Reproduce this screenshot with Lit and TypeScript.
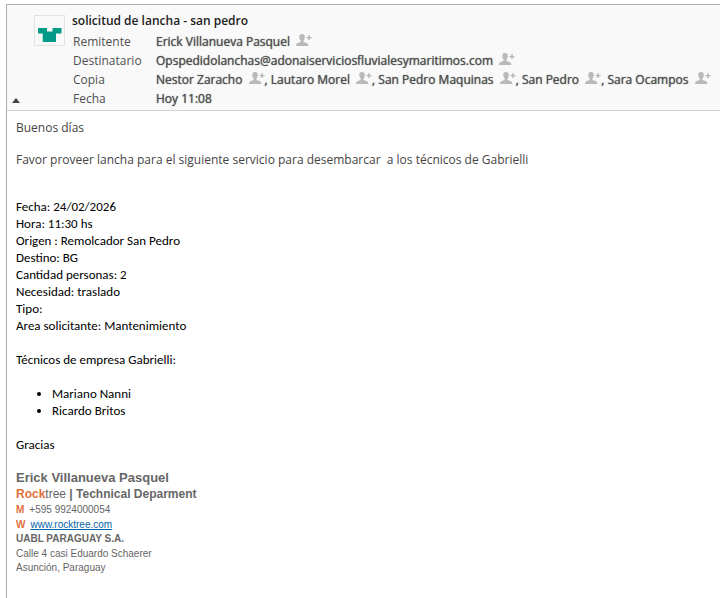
import { LitElement, html, css } from "lit";
import { customElement, property } from "lit/decorators.js";

@customElement("mail-contact")
class MailContact extends LitElement {
  @property() name = "";

  static styles = css`
    :host {
      white-space: nowrap;
    }
    .add {
      width: 16px;
      height: 12px;
      margin: 0 0 0 3px;
      padding: 0;
      border: 0;
      background: none;
      cursor: pointer;
    }
    .icon {
      display: block;
      fill: #b9b9b9;
    }
  `;

  render() {
    return html`${this.name}
      <button class="add" type="button" aria-label="Agregar contacto ${this.name}">
        <svg class="icon" width="16" height="12" viewBox="0 0 16 12" aria-hidden="true">
          <path d="M6 0C8 0 8.8 1 8.8 2.7C8.8 4.6 8.3 5.6 7.6 6.3V8L11.2 9.3Q12.3 9.8 12.3 12H0Q0 9.8 1.1 9.3L4.6 8V6.3C3.8 5.6 3.3 4.6 3.3 2.7C3.3 1 4.1 0 6 0Z" />
          <path d="M12.2 1.2H13.8V2.9H15.6V4.3H13.8V6H12.2V4.3H10.4V2.9H12.2Z" />
        </svg>
      </button>`;
  }
}

@customElement("app-root")
class AppRoot extends LitElement {
  private copies = ["Nestor Zaracho", "Lautaro Morel", "San Pedro Maquinas", "San Pedro", "Sara Ocampos"];

  private details = [
    "Fecha: 24/02/2026",
    "Hora: 11:30 hs",
    "Origen : Remolcador San Pedro",
    "Destino: BG",
    "Cantidad personas: 2",
    "Necesidad: traslado",
    "Tipo:",
    "Area solicitante: Mantenimiento",
  ];

  static styles = css`
    :host {
      display: block;
      box-sizing: border-box;
      min-height: 100vh;
      padding: 4px 0 0 6px;
      background: #fff;
      font: 12px/19px "Open Sans", sans-serif;
      color: #505050;
    }
    .message {
      box-sizing: border-box;
      min-height: calc(100vh - 4px);
      border-top: 1px solid #a9afb2;
      border-left: 1px solid #a9afb2;
    }
    .header {
      display: flex;
      padding: 6px 0 2px 5px;
      background: #f9f9f9;
      border-bottom: 1px solid #cfd2d3;
    }
    .toggle {
      align-self: flex-end;
      flex: none;
      width: 8px;
      height: 5px;
      margin: 0 14px 5px 0;
      padding: 0;
      border: 0;
      background: #444;
      clip-path: polygon(50% 0, 100% 100%, 0 100%);
      cursor: pointer;
    }
    .avatar {
      box-sizing: border-box;
      width: 31px;
      height: 31px;
      margin: 4px 7px 0 0;
      flex: none;
      border: 1px solid #e2e2e2;
    }
    .subject {
      margin: 0 0 2px;
      font-size: 12px;
      font-weight: 600;
      color: #222;
    }
    .fields {
      display: grid;
      grid-template-columns: 83px 1fr;
      margin: 0 0 0 1px;
    }
    .fields dt,
    .fields dd {
      margin: 0;
    }
    .fields dd {
      color: #505050;
      text-shadow: 0 0 1px currentColor;
    }
    .body {
      padding: 9px;
      line-height: 16px;
    }
    .text {
      margin: 0 0 16px;
      color: #444;
    }
    .plain {
      margin-top: 30px;
      font: 13px/17px Carlito, Lato, sans-serif;
      color: #000;
    }
    .plain p {
      margin: 0 0 17px;
    }
    .plain ul {
      margin: 0 0 17px;
      padding-left: 36px;
    }
    .signature {
      font: 10px/14px "Liberation Sans", sans-serif;
      font-style: normal;
      color: #666;
    }
    .name {
      font-size: 13px;
      line-height: 16px;
      font-weight: bold;
    }
    .role {
      font-size: 12px;
      line-height: 16px;
    }
    .line {
      line-height: 15px;
    }
    .accent {
      color: #e0703c;
    }
    .key {
      display: inline-block;
      margin-right: 5px;
      font-weight: bold;
      color: #e0703c;
    }
    a {
      color: #0563a8;
    }
  `;

  render() {
    return html`
      <article class="message">
        <header class="header">
          <button class="toggle" type="button" aria-label="Contraer detalles"></button>
          <svg class="avatar" viewBox="0 0 29 29" aria-hidden="true">
            <path fill="#049a88" d="M3 12H12V15.5H17.5V12H26.5V17.5H21V26H7.7V17.5H3Z" />
          </svg>
          <div>
            <h1 class="subject">solicitud de lancha - san pedro</h1>
            <dl class="fields">
              <dt>Remitente</dt>
              <dd><mail-contact name="Erick Villanueva Pasquel"></mail-contact></dd>
              <dt>Destinatario</dt>
              <dd><mail-contact name="Opspedidolanchas@adonaiserviciosfluvialesymaritimos.com"></mail-contact></dd>
              <dt>Copia</dt>
              <dd>${this.copies.map((n, i) => html`${i ? ", " : ""}<mail-contact name=${n}></mail-contact>`)}</dd>
              <dt>Fecha</dt>
              <dd>Hoy 11:08</dd>
            </dl>
          </div>
        </header>
        <div class="body">
          <p class="text">Buenos días</p>
          <p class="text">Favor proveer lancha para el siguiente servicio para desembarcar&nbsp; a los técnicos de Gabrielli</p>
          <div class="plain">
            <p>${this.details.map((d) => html`${d}<br />`)}</p>
            <p>Técnicos de empresa Gabrielli:</p>
            <ul>
              <li>Mariano Nanni</li>
              <li>Ricardo Britos</li>
            </ul>
            <p>Gracias</p>
          </div>
          <address class="signature">
            <div class="name">Erick Villanueva Pasquel</div>
            <div class="role"><b class="accent">Rock</b>tree <b>| Technical Deparment</b></div>
            <div class="line"><span class="key">M</span>+595 9924000054</div>
            <div class="line"><span class="key">W</span><a href="http://www.rocktree.com">www.rocktree.com</a></div>
            <div><b>UABL PARAGUAY S.A.</b></div>
            <div class="line">Calle 4 casi Eduardo Schaerer</div>
            <div>Asunción, Paraguay</div>
          </address>
        </div>
      </article>
    `;
  }
}
